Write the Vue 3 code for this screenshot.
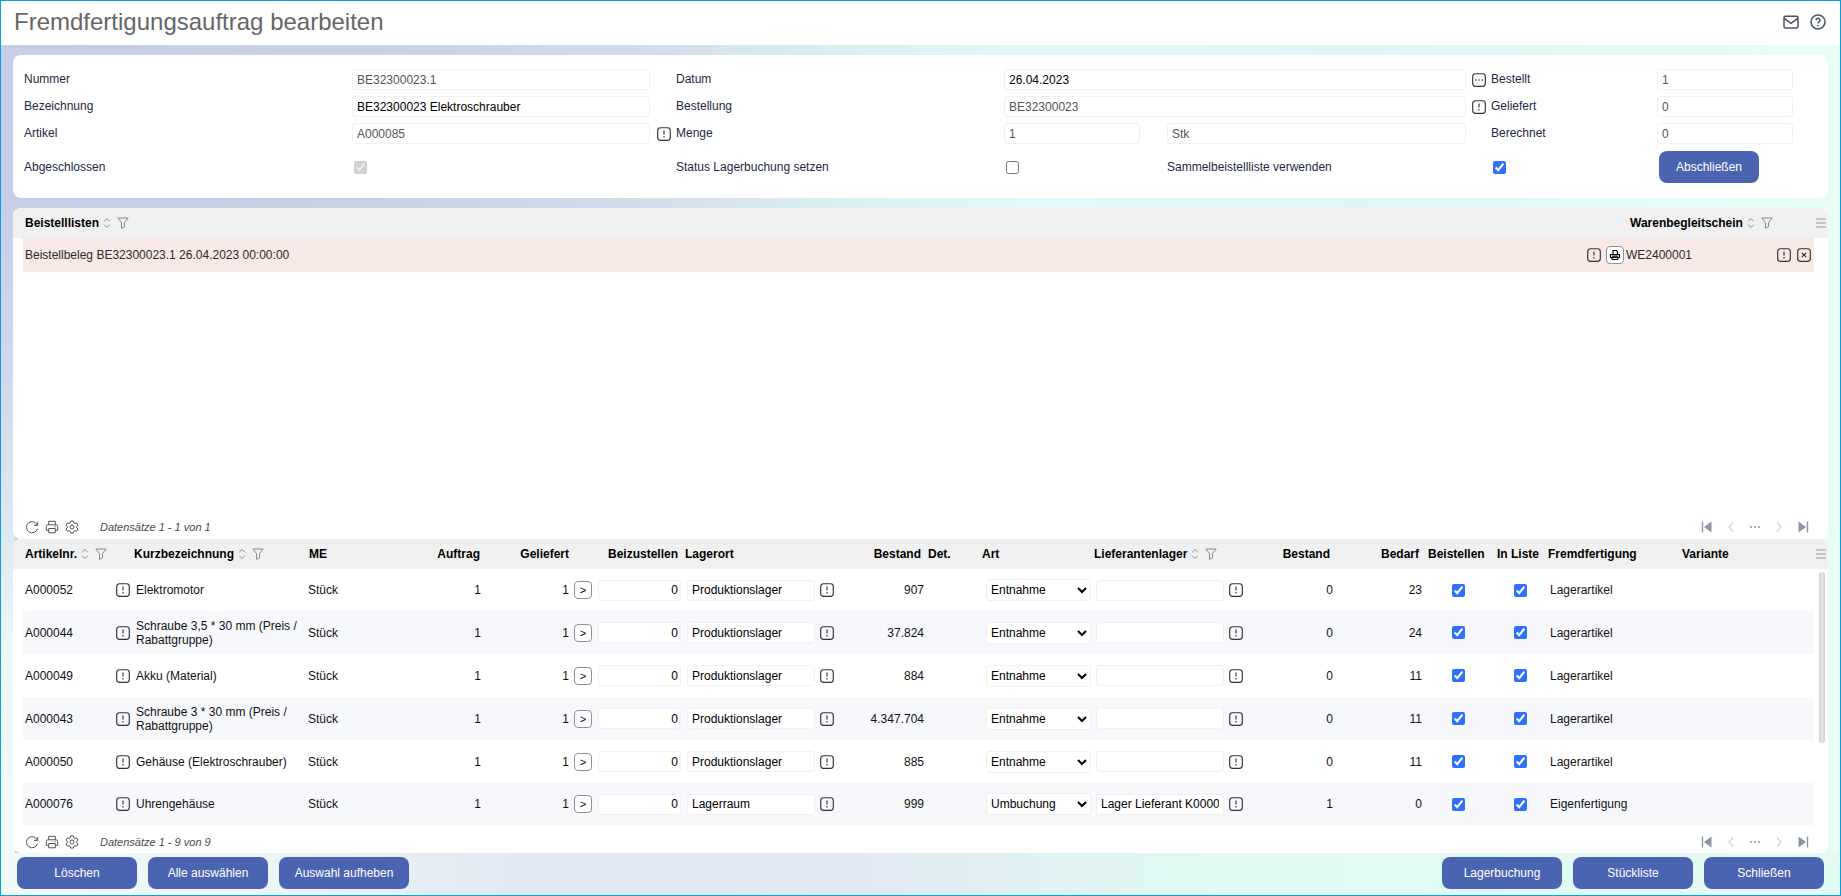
<script setup>
import { h, reactive } from 'vue'

const frame = 'M3.500 .7h7a2.800 2.800 0 0 1 2.800 2.800v7a2.800 2.800 0 0 1-2.800 2.800h-7A2.800 2.800 0 0 1 .7 10.500v-7A2.800 2.800 0 0 1 3.500 .7z'
const iconPaths = {
  info: { box: '0 0 14 14', d: frame + 'M7 3.500v4M7 9v1.600' },
  dots: { box: '0 0 14 14', d: frame + 'M3 7h1.700M6.200 7h1.700M9.400 7h1.700' },
  close: { box: '0 0 14 14', d: frame + 'M4.800 4.800l4.400 4.400M9.200 4.800l-4.400 4.400' },
  sort: { box: '0 0 8 12', d: 'M1.200 4.300L4 1.500l2.800 2.800M1.200 7.700L4 10.500l2.800-2.800' },
  filter: { box: '0 0 12 12', d: 'M.8 1h10.400L7.500 5.600v4.200l-3 1.500V5.600z' },
  menu: { box: '0 0 12 12', d: 'M1 2h10M1 6h10M1 10h10' },
  refresh: { box: '0 0 14 14', d: 'M12.300 5.200A5.600 5.600 0 1 0 12.500 8.600M12.700 1.800v3.600H9.200' },
  printer: { box: '0 0 14 14', d: 'M3.700 4.800V1.300h6.600v3.500M3.700 10.300H1.300V6.300a1.500 1.500 0 0 1 1.500-1.500h8.400a1.500 1.500 0 0 1 1.500 1.500v4h-2.400M3.700 8.500h6.600v4.300H3.700zM9.300 6.700h1.300' },
  gear: { box: '0 0 14 14', d: 'M5.700 1h2.600l.4 1.700 1.300.8 1.700-.5 1.300 2.200-1.300 1.200v1.400l1.300 1.200-1.300 2.200-1.700-.5-1.300.8-.4 1.600H5.700l-.4-1.600-1.300-.8-1.700.5L1 9l1.300-1.200V6.400L1 5.200 2.300 3l1.700.5 1.300-.8zM9 7.100a2 2 0 1 1-4 0 2 2 0 0 1 4 0z' },
  print: { box: '0 0 12 12', d: 'M4 5V1.500h3.500L8.500 3v2M1.500 5.500h9v3h-9zM3 7.200h6M2.500 8.500l1 2h5l1-2' },
  mail: { box: '0 0 16 16', d: 'M2.300 2.300h11.400a1.300 1.300 0 0 1 1.300 1.300v9a1.300 1.300 0 0 1-1.300 1.300H2.300A1.300 1.300 0 0 1 1 12.600v-9a1.300 1.300 0 0 1 1.300-1.300zM1.300 4.300L8 9.300l6.700-5' },
  help: { box: '0 0 16 16', d: 'M15 8A7 7 0 1 1 1 8a7 7 0 0 1 14 0zM6 6.300a2 2 0 1 1 3 1.700c-.7.400-1 .7-1 1.400M8 11v1.200' },
  first: { box: '0 0 14 14', d: 'M2.500 1.500v11', fill: 'M11.500 1.500v11L4 7z' },
  prev: { box: '0 0 14 14', d: 'M9 2.500L5 7l4 4.500' },
  more: { box: '0 0 14 14', d: 'M2 7h2M6 7h2M10 7h2' },
  next: { box: '0 0 14 14', d: 'M5 2.500L9 7l-4 4.500' },
  last: { box: '0 0 14 14', d: 'M11.500 1.500v11', fill: 'M2.500 1.500v11L10 7z' }
}

const Icon = (props) => {
  const icon = iconPaths[props.name]
  return h('svg', { viewBox: icon.box, fill: 'none', stroke: 'currentColor', 'aria-hidden': 'true' }, [
    icon.fill ? h('path', { d: icon.fill, fill: 'currentColor', stroke: 'none' }) : null,
    h('path', { d: icon.d })
  ])
}
Icon.props = ['name']

const columns = [
  { key: 'artikel', label: 'Artikelnr.', tools: true },
  { key: 'kurz', label: 'Kurzbezeichnung', tools: true },
  { key: 'me', label: 'ME' },
  { key: 'auftrag', label: 'Auftrag' },
  { key: 'geliefert', label: 'Geliefert' },
  { key: 'beizustellen', label: 'Beizustellen' },
  { key: 'lagerort', label: 'Lagerort' },
  { key: 'bestand', label: 'Bestand' },
  { key: 'det', label: 'Det.' },
  { key: 'art', label: 'Art' },
  { key: 'lieferant', label: 'Lieferantenlager', tools: true },
  { key: 'bestand2', label: 'Bestand' },
  { key: 'bedarf', label: 'Bedarf' },
  { key: 'beistellen', label: 'Beistellen' },
  { key: 'liste', label: 'In Liste' },
  { key: 'fremd', label: 'Fremdfertigung' },
  { key: 'variante', label: 'Variante' }
]

const row = (nr, name, lager, bestand, art, lieferant, bestand2, bedarf, fremd) => ({
  nr, name, lager, bestand, art, lieferant, bestand2, bedarf, fremd,
  menge: '0', beistellen: true, liste: true
})

const rows = reactive([
  row('A000052', 'Elektromotor', 'Produktionslager', '907', 'Entnahme', '', '0', '23', 'Lagerartikel'),
  row('A000044', 'Schraube 3,5 * 30 mm (Preis / Rabattgruppe)', 'Produktionslager', '37.824', 'Entnahme', '', '0', '24', 'Lagerartikel'),
  row('A000049', 'Akku (Material)', 'Produktionslager', '884', 'Entnahme', '', '0', '11', 'Lagerartikel'),
  row('A000043', 'Schraube 3 * 30 mm (Preis / Rabattgruppe)', 'Produktionslager', '4.347.704', 'Entnahme', '', '0', '11', 'Lagerartikel'),
  row('A000050', 'Gehäuse (Elektroschrauber)', 'Produktionslager', '885', 'Entnahme', '', '0', '11', 'Lagerartikel'),
  row('A000076', 'Uhrengehäuse', 'Lagerraum', '999', 'Umbuchung', 'Lager Lieferant K00004', '1', '0', 'Eigenfertigung')
])

const pager = [
  { icon: 'first', label: 'Erste Seite' },
  { icon: 'prev', label: 'Vorherige Seite', pale: true },
  { icon: 'more', label: 'Seite wählen' },
  { icon: 'next', label: 'Nächste Seite', pale: true },
  { icon: 'last', label: 'Letzte Seite' }
]
const tools = [
  { icon: 'refresh', label: 'Aktualisieren' },
  { icon: 'printer', label: 'Drucken' },
  { icon: 'gear', label: 'Einstellungen' }
]
</script>

<template>
  <div class="page">
    <header class="titlebar">
      <h1>Fremdfertigungsauftrag bearbeiten</h1>
      <div class="title-actions">
        <button type="button" class="bare" aria-label="Nachricht"><Icon name="mail" /></button>
        <button type="button" class="bare" aria-label="Hilfe"><Icon name="help" /></button>
      </div>
    </header>

    <main class="content">
      <form class="panel details" @submit.prevent>
        <label for="nummer" class="c-1">Nummer</label>
        <input id="nummer" class="field c-2" value="BE32300023.1" disabled />
        <label for="datum" class="c-4">Datum</label>
        <input id="datum" class="field c-wide" value="26.04.2023" />
        <button type="button" class="bare c-8" aria-label="Datum wählen"><Icon name="dots" /></button>
        <label for="bestellt" class="c-9">Bestellt</label>
        <input id="bestellt" class="field c-10" value="1" disabled />

        <label for="bezeichnung" class="c-1">Bezeichnung</label>
        <input id="bezeichnung" class="field c-2" value="BE32300023 Elektroschrauber" />
        <label for="bestellung" class="c-4">Bestellung</label>
        <input id="bestellung" class="field c-wide" value="BE32300023" disabled />
        <button type="button" class="bare c-8" aria-label="Bestellung öffnen"><Icon name="info" /></button>
        <label for="geliefert" class="c-9">Geliefert</label>
        <input id="geliefert" class="field c-10" value="0" disabled />

        <label for="artikel" class="c-1">Artikel</label>
        <input id="artikel" class="field c-2" value="A000085" disabled />
        <button type="button" class="bare c-3" aria-label="Artikel öffnen"><Icon name="info" /></button>
        <label for="menge" class="c-4">Menge</label>
        <input id="menge" class="field c-5" value="1" disabled />
        <input id="einheit" class="field c-7" value="Stk" aria-label="Einheit" disabled />
        <label for="berechnet" class="c-9">Berechnet</label>
        <input id="berechnet" class="field c-10" value="0" disabled />

        <label for="abgeschlossen" class="c-1">Abgeschlossen</label>
        <input id="abgeschlossen" type="checkbox" class="check c-2" checked disabled />
        <label for="status" class="c-4">Status Lagerbuchung setzen</label>
        <input id="status" type="checkbox" class="check c-5" />
        <label for="sammel" class="c-7">Sammelbeistellliste verwenden</label>
        <input id="sammel" type="checkbox" class="check c-9" checked />
        <button type="button" class="primary finish c-10">Abschließen</button>
      </form>

      <section class="panel lists">
        <table>
          <colgroup>
            <col class="w-edge" /><col /><col class="w-schein" /><col class="w-end" />
          </colgroup>
          <thead>
            <tr>
              <td></td>
              <th scope="col" class="h-artikel">
                <div class="head">Beistelllisten <Icon name="sort" class="sort" /><Icon name="filter" class="filter" /></div>
              </th>
              <th scope="col" class="h-schein">
                <div class="head">Warenbegleitschein <Icon name="sort" class="sort" /><Icon name="filter" class="filter" /></div>
              </th>
              <td class="menu-cell"><button type="button" class="bare menu" aria-label="Spalten"><Icon name="menu" /></button></td>
            </tr>
          </thead>
          <tbody>
            <tr class="marked">
              <td></td>
              <td class="d-beleg">
                <div class="cell spread">
                  <span>Beistellbeleg BE32300023.1 26.04.2023 00:00:00</span>
                  <button type="button" class="bare" aria-label="Beleg öffnen"><Icon name="info" /></button>
                </div>
              </td>
              <td class="d-schein">
                <div class="cell">
                  <button type="button" class="mini print" aria-label="Beleg drucken"><Icon name="print" /></button>
                  <span class="grow">WE2400001</span>
                  <button type="button" class="bare" aria-label="Warenbegleitschein öffnen"><Icon name="info" /></button>
                  <button type="button" class="bare" aria-label="Warenbegleitschein entfernen"><Icon name="close" /></button>
                </div>
              </td>
              <td></td>
            </tr>
          </tbody>
        </table>
        <div class="toolbar">
          <button v-for="t in tools" :key="t.icon" type="button" class="bare" :aria-label="t.label"><Icon :name="t.icon" /></button>
          <span class="count">Datensätze 1 - 1 von 1</span>
          <nav class="pager" aria-label="Seiten Beistelllisten">
            <button v-for="p in pager" :key="p.icon" type="button" class="bare" :class="{ pale: p.pale }" :aria-label="p.label"><Icon :name="p.icon" /></button>
          </nav>
        </div>
      </section>

      <section class="panel items">
        <div class="scroller">
          <table>
            <colgroup>
              <col class="w-edge" />
              <col v-for="c in columns" :key="c.key" :class="'w-' + c.key" />
              <col class="w-end" />
            </colgroup>
            <thead>
              <tr>
                <td></td>
                <th v-for="c in columns" :key="c.key" scope="col" :class="'h-' + c.key">
                  <div v-if="c.tools" class="head">{{ c.label }} <Icon name="sort" class="sort" /><Icon name="filter" class="filter" /></div>
                  <template v-else>{{ c.label }}</template>
                </th>
                <td class="menu-cell"><button type="button" class="bare menu" aria-label="Spalten"><Icon name="menu" /></button></td>
              </tr>
            </thead>
            <tbody>
              <tr v-for="r in rows" :key="r.nr">
                <td></td>
                <td class="d-artikel">
                  <div class="cell spread">
                    <span>{{ r.nr }}</span>
                    <button type="button" class="bare" :aria-label="r.nr + ' öffnen'"><Icon name="info" /></button>
                  </div>
                </td>
                <td class="d-kurz">{{ r.name }}</td>
                <td class="d-me">Stück</td>
                <td class="num">1</td>
                <td class="d-geliefert">
                  <div class="cell end">1 <button type="button" class="mini" aria-label="Übernehmen">&gt;</button></div>
                </td>
                <td class="d-beizustellen"><input v-model="r.menge" class="field right" :aria-label="'Beizustellen ' + r.nr" /></td>
                <td class="d-lagerort">
                  <div class="cell">
                    <input v-model="r.lager" class="field" :aria-label="'Lagerort ' + r.nr" />
                    <button type="button" class="bare" aria-label="Lagerort öffnen"><Icon name="info" /></button>
                  </div>
                </td>
                <td class="num">{{ r.bestand }}</td>
                <td></td>
                <td class="d-art">
                  <select v-model="r.art" :aria-label="'Art ' + r.nr">
                    <option>Entnahme</option>
                    <option>Umbuchung</option>
                  </select>
                </td>
                <td class="d-lieferant">
                  <div class="cell">
                    <input v-model="r.lieferant" class="field" :aria-label="'Lieferantenlager ' + r.nr" />
                    <button type="button" class="bare" aria-label="Lieferantenlager öffnen"><Icon name="info" /></button>
                  </div>
                </td>
                <td class="num">{{ r.bestand2 }}</td>
                <td class="num">{{ r.bedarf }}</td>
                <td class="tick"><input v-model="r.beistellen" type="checkbox" :aria-label="'Beistellen ' + r.nr" /></td>
                <td class="tick"><input v-model="r.liste" type="checkbox" :aria-label="'In Liste ' + r.nr" /></td>
                <td class="d-fremd">{{ r.fremd }}</td>
                <td></td>
                <td></td>
              </tr>
            </tbody>
          </table>
          <div class="thumb"></div>
        </div>
        <div class="toolbar">
          <button v-for="t in tools" :key="t.icon" type="button" class="bare" :aria-label="t.label"><Icon :name="t.icon" /></button>
          <span class="count">Datensätze 1 - 9 von 9</span>
          <nav class="pager" aria-label="Seiten Artikel">
            <button v-for="p in pager" :key="p.icon" type="button" class="bare" :class="{ pale: p.pale }" :aria-label="p.label"><Icon :name="p.icon" /></button>
          </nav>
        </div>
      </section>
    </main>

    <footer class="actions">
      <button type="button" class="primary">Löschen</button>
      <button type="button" class="primary">Alle auswählen</button>
      <button type="button" class="primary wide">Auswahl aufheben</button>
      <span class="grow"></span>
      <button type="button" class="primary">Lagerbuchung</button>
      <button type="button" class="primary">Stückliste</button>
      <button type="button" class="primary">Schließen</button>
    </footer>
  </div>
</template>

<style>
body {
  margin: 0;
}
</style>

<style scoped>
* {
  box-sizing: border-box;
}
.page {
  min-height: 100vh;
  display: flex;
  flex-direction: column;
  border: 1px solid #06a0e0;
  font: 12px/14px "Liberation Sans", Arial, sans-serif;
  color: #111;
  background:
    linear-gradient(180deg, #c5cee6 0, #c5cee6 22%, #cfdbec 42%, #dde9f2 60%, #ecf7f7 72%, #f1fbfa 100%) left / 14px 100% no-repeat,
    linear-gradient(90deg, #c5cee6 0, #c6d0e7 20%, #d3deec 36%, #daf2f2 47%, #dffaf8 56%, #def7f5 74%, #e8fdf8 100%);
}
button, input, select {
  font: inherit;
  color: inherit;
}
button {
  cursor: pointer;
}
.titlebar {
  display: flex;
  align-items: center;
  justify-content: space-between;
  height: 44px;
  padding: 0 14px 2px 13px;
  background: #fff;
}
h1 {
  margin: 0;
  font-size: 24px;
  line-height: 28px;
  font-weight: 400;
  color: #666;
}
.title-actions {
  display: flex;
  gap: 11px;
  color: #4b5563;
}
.content {
  flex: 1;
  display: flex;
  flex-direction: column;
  padding: 10px 12px 0;
}
.panel {
  background: #fff;
  border-radius: 8px;
  overflow: hidden;
}
.details {
  display: grid;
  grid-template-columns: 328fr 298fr 26fr 328fr 136fr 27fr 299fr 25fr 166fr 136fr 26fr;
  grid-template-rows: 21px 21px 21px 34px;
  row-gap: 6px;
  align-items: center;
  padding: 14px 9px 14px 11px;
  margin-bottom: 10px;
  color: #1c2842;
}
.details label {
  padding-bottom: 1px;
}
.c-1 { grid-column: 1; }
.c-2 { grid-column: 2; }
.c-3 { grid-column: 3; }
.c-4 { grid-column: 4; }
.c-5 { grid-column: 5; }
.c-7 { grid-column: 7; }
.c-8 { grid-column: 8; }
.c-9 { grid-column: 9; }
.c-10 { grid-column: 10; }
.c-wide { grid-column: 5 / 8; }
.details .bare {
  justify-self: end;
  margin-right: 5px;
}
.field {
  width: 100%;
  min-width: 0;
  height: 21px;
  padding: 0 4px;
  border: 1px solid #f1f1f1;
  border-radius: 3px;
  background: #fff;
  color: #000;
}
.field:disabled {
  color: #545454;
}
.right {
  text-align: right;
  padding-right: 2px;
}
input[type="checkbox"] {
  width: 13px;
  height: 13px;
  margin: 0;
  accent-color: #3070ff;
}
.details .check {
  margin-left: 2px;
}
.bare {
  display: inline-flex;
  flex: none;
  padding: 0;
  border: 0;
  background: none;
  color: inherit;
}
.bare svg {
  width: 14px;
  height: 14px;
}
.title-actions .bare svg {
  width: 16px;
  height: 16px;
  stroke-width: 1.5;
}
.panel .bare {
  color: #333;
  stroke-width: 1.15;
}
.primary {
  height: 32px;
  width: 120px;
  border: 0;
  border-radius: 8px;
  background: #4b64b1;
  color: #fff;
}
.primary.wide {
  width: 130px;
}
.primary.finish {
  width: 100px;
  margin-left: 2px;
}
table {
  width: 100%;
  table-layout: fixed;
  border-collapse: collapse;
}
th, td {
  padding: 0;
  text-align: left;
  white-space: nowrap;
}
thead tr {
  height: 30px;
  background: #f0f0f0;
}
th {
  font-weight: 700;
  color: #000;
}
.head {
  display: flex;
  align-items: center;
}
.sort {
  width: 8px;
  height: 12px;
  margin: 0 6px 0 4px;
  color: #8a8a8a;
}
.filter {
  width: 12px;
  height: 12px;
  color: #888;
}
.menu-cell {
  vertical-align: middle;
}
.panel .menu {
  display: flex;
  margin-left: 1px;
  color: #999;
  stroke-width: 1;
}
.menu svg {
  width: 12px;
  height: 12px;
}
.cell {
  display: flex;
  align-items: center;
  gap: 5px;
}
.spread {
  justify-content: space-between;
}
.end {
  justify-content: flex-end;
}
.grow {
  flex: 1;
}
.lists {
  flex: 1;
  display: flex;
  flex-direction: column;
}
.marked {
  height: 34px;
  color: #2c2c2c;
}
.marked td:nth-child(2), .marked td:nth-child(3) {
  background: #f8e8e6;
}
.d-beleg { padding: 0 3px 0 2px; }
.d-schein { padding: 0 3px 0 2px; }
.d-schein .cell { gap: 6px; }
.mini {
  display: inline-flex;
  flex: none;
  align-items: center;
  justify-content: center;
  width: 18px;
  height: 18px;
  padding: 0;
  border: 1px solid #8f8f9d;
  border-radius: 4px;
  background: #fff;
  color: #000;
  font-size: 11px;
}
.print svg {
  flex: none;
  width: 12px;
  height: 12px;
  stroke-width: 1.2;
}
.print + .grow {
  margin-left: -4px;
}
.toolbar {
  display: flex;
  align-items: center;
  gap: 6px;
  height: 26px;
  margin-top: auto;
  padding: 2px 18px 0 12px;
}
.toolbar .bare {
  color: #555;
  stroke-width: 1;
}
.count {
  margin-left: 15px;
  font-size: 11px;
  font-style: italic;
  color: #4a4a4a;
}
.pager {
  display: flex;
  gap: 10px;
  margin-left: auto;
}
.pager .bare {
  color: #8b96a5;
  stroke-width: 1.4;
}
.pager .pale {
  color: #d3d6da;
}
.scroller {
  position: relative;
}
.thumb {
  position: absolute;
  top: 33px;
  right: 3px;
  width: 6px;
  height: 171px;
  border-radius: 3px;
  background: linear-gradient(90deg, #cfcfcf, #e6e6e6 50%, #cfcfcf);
}
.items tbody tr {
  height: 43px;
}
.items tbody tr:first-child, .items tbody tr:last-child {
  height: 42px;
}
.items .toolbar {
  height: 28px;
  padding-top: 6px;
}
.items tbody tr:nth-child(even) td:not(:first-child):not(:last-child) {
  background: #f7f8fc;
}
.w-edge { width: 10px; }
.w-end { width: 14px; }
.w-schein { width: 210px; }
.w-artikel { width: 108px; }
.w-kurz { width: 175px; }
.w-me { width: 94px; }
.w-auftrag { width: 83px; }
.w-geliefert { width: 113px; }
.w-beizustellen { width: 88px; }
.w-lagerort { width: 152px; }
.w-bestand { width: 90px; }
.w-det { width: 54px; }
.w-art { width: 112px; }
.w-lieferant { width: 153px; }
.w-bestand2 { width: 90px; }
.w-bedarf { width: 89px; }
.w-beistellen { width: 69px; }
.w-liste { width: 54px; }
.w-fremd { width: 133px; }
.h-artikel, .h-det, .h-art, .h-variante, .h-lieferant { padding-left: 2px; }
.h-kurz, .h-me { padding-left: 3px; }
.h-lagerort, .h-fremd { padding-left: 1px; }
.h-beistellen, .h-liste { padding-left: 4px; }
.h-schein { padding-left: 26px; }
.h-auftrag, .h-geliefert, .h-beizustellen, .h-bestand, .h-bestand2, .h-bedarf { text-align: right; padding-right: 5px; }
.h-auftrag { padding-right: 3px; }
.h-geliefert { padding-right: 27px; }
.h-beizustellen { padding-right: 6px; }
.d-artikel { padding: 0 1px 0 2px; }
.d-kurz { padding-left: 5px; white-space: normal; }
.d-me { padding-left: 2px; }
.num { text-align: right; padding-right: 2px; }
.d-geliefert { padding-right: 4px; }
.d-beizustellen { padding: 0 3px 0 2px; }
.d-lagerort { padding: 0 2px 0 3px; }
.d-lieferant { padding: 0 2px 0 4px; }
.d-art { padding: 0 1px 0 6px; }
.d-fremd { padding-left: 3px; }
.tick { text-align: center; }
.tick input {
  display: block;
  margin: 0 auto;
}
select {
  display: block;
  width: 100%;
  height: 22px;
  padding: 0;
  border: 1px solid #f1f1f1;
  border-radius: 3px;
  background: #fff;
  color: #000;
}
.actions {
  display: flex;
  gap: 11px;
  padding: 4px 16px 6px;
  background: linear-gradient(90deg, #f1fbfa 0, #ecf5f7 14%, #e2e9f3 28%, #e2e8f3 46%, #e0f0f3 54%, #e0f9f2 66%, #e4fbf5 100%);
}
.actions .grow {
  margin: 0 -11px;
}
</style>
